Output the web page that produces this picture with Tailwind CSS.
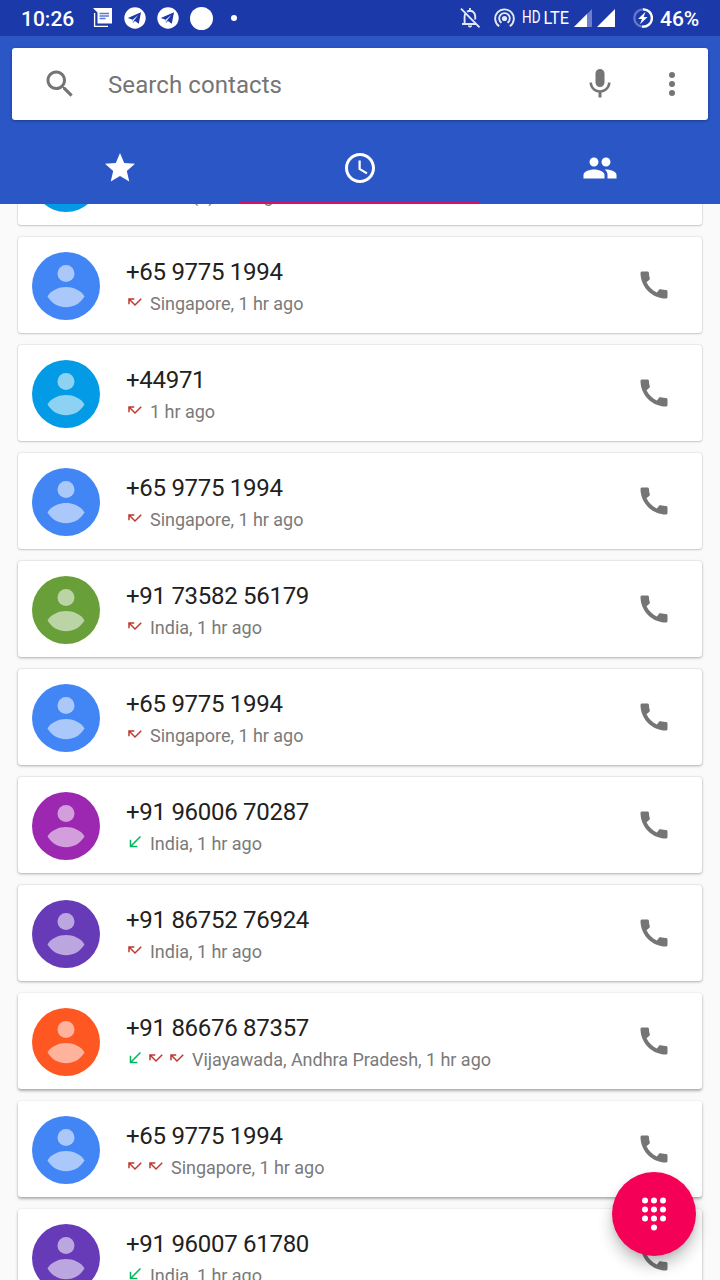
<!DOCTYPE html>
<html lang="en">
<head>
<meta charset="utf-8">
<title>Phone</title>
<script src="https://cdn.jsdelivr.net/npm/@tailwindcss/browser@4"></script>
</head>
<body class="w-[720px] h-[1280px] overflow-hidden bg-[#fafafa] font-[Roboto,sans-serif]">
<svg class="hidden">
  <symbol id="call" viewBox="0 0 24 24"><path d="M20.01 15.38c-1.23 0-2.42-.2-3.53-.56-.35-.12-.74-.03-1.01.24l-1.57 1.97c-2.83-1.35-5.48-3.9-6.89-6.83l1.95-1.66c.27-.28.35-.67.24-1.02-.37-1.11-.56-2.3-.56-3.53 0-.54-.45-.99-.99-.99H4.19C3.65 3 3 3.24 3 3.99 3 13.28 10.73 21 20.01 21c.71 0 .99-.63.99-1.18v-3.45c0-.54-.45-.99-.99-.99z"/></symbol>
  <symbol id="missed" viewBox="0 0 24 24"><path d="M19.59 7L12 14.59 6.41 9H11V7H3v8h2v-4.59l7 7 9-9L19.59 7z"/></symbol>
  <symbol id="received" viewBox="0 0 24 24"><path d="M20 5.41L18.59 4 7 15.59V9H5v10h10v-2H8.41z"/></symbol>
  <symbol id="person" viewBox="0 0 68 68"><circle cx="34" cy="21.5" r="8.5"/><path d="M15.5 44.5C19 38.200 27 35 34 35S49 38.200 52.500 44.500C48 52 41 55.200 34 55.200S20 52 15.500 44.500z"/></symbol>
  <symbol id="telegram" viewBox="0 0 22 22"><circle cx="11" cy="11" r="10.700" fill="#fff"/><path d="M3.800 11L17 5.300 14.800 16.800 10.900 14.100 9 16 8.600 12.800z" fill="#1c39aa"/><path d="M8.700 12.700L14.300 8 9.900 13.500 9 15.800z" fill="#fff"/></symbol>
</svg>
<div class="flex flex-col w-[720px] h-[1280px]">
  <!-- Status bar -->
  <div class="h-9 shrink-0 bg-[#1c39aa] flex items-center justify-between pl-[21px] pr-[20px] text-white">
    <div class="flex items-center">
      <span class="w-[72px] text-[21px] leading-9 font-medium pt-px">10:26</span>
      <svg class="w-5 h-5" viewBox="0 0 20 20"><path d="M0 0H19V15.500H4.500V4.500z" fill="#fff"/><path d="M1.600 5V18.300H15" fill="none" stroke="#fff" stroke-width="1.300"/><path d="M6.500 5.500H16M6.500 8H16M6.500 10.500H12.500" stroke="#5f78cf" stroke-width="1.300"/></svg>
      <svg class="w-[22px] h-[22px] ml-[11px]"><use href="#telegram"/></svg>
      <svg class="w-[22px] h-[22px] ml-[11px]"><use href="#telegram"/></svg>
      <span class="size-[23px] rounded-full bg-white ml-[11px]"></span>
      <span class="size-[6px] rounded-full bg-white ml-[18px]"></span>
    </div>
    <div class="flex items-center">
      <svg class="w-[22px] h-[22px]" viewBox="0 0 22 22" fill="none" stroke="#e3e8f7" stroke-width="1.900"><path d="M1 1.700L19.500 20.300M2 17H16.500M4.600 16.500V9.500Q4.700 7.500 5.700 6.200M7 4.700Q8.500 3.700 10 3.700 14.800 4.200 15.200 9.200V12.500M10 1V3.500"/><path d="M8.200 19H11.800L10 20.300z" fill="#e3e8f7" stroke-width="1"/></svg>
      <svg class="w-[22px] h-[22px] ml-[12px]" viewBox="0 0 22 22" fill="none" stroke="#e3e8f7" stroke-width="1.900"><circle cx="10.500" cy="11.500" r="2.600" fill="#e3e8f7" stroke="none"/><path d="M5.200 19.300A9.300 9.300 0 1 1 15.800 19.300"/><path d="M7.500 15.800A5.300 5.300 0 1 1 13.500 15.800"/></svg>
      <svg class="w-[48px] h-6 ml-[6px]" viewBox="0 0 48 24" fill="#fff" font-family="Roboto" font-size="18"><text x="0" y="17.300" textLength="18.500" lengthAdjust="spacingAndGlyphs">HD</text><text x="21.500" y="18.200" textLength="25.500" lengthAdjust="spacingAndGlyphs">LTE</text></svg>
      <svg class="w-[18px] h-[18px] ml-[4px]" viewBox="0 0 18 18"><path d="M18 0V18H0z" fill="#6d80c9"/><path d="M13 5V18H0z" fill="#fff"/></svg>
      <svg class="w-[18px] h-[18px] ml-[5px]" viewBox="0 0 18 18"><path d="M18 0V18H0z" fill="#fff"/></svg>
      <svg class="w-5 h-5 ml-[18px]" viewBox="0 0 20 20"><circle cx="10" cy="10" r="8.700" fill="none" stroke="#6478c6" stroke-width="2.300"/><path d="M10 1.300A8.700 8.700 0 1 1 9 18.600" fill="none" stroke="#fff" stroke-width="2.300"/><path d="M12.500 3.800L5 11H9L7 16.300 14.600 9H10.700z" fill="#fff"/></svg>
      <span class="ml-[7px] text-[21px] leading-9 font-medium w-[40px] whitespace-nowrap pt-px">46%</span>
    </div>
  </div>
  <!-- Search and tabs -->
  <div class="h-[168px] shrink-0 bg-[#2a56c6] pt-3 flex flex-col">
    <div class="mx-3 h-[72px] shrink-0 bg-white rounded-[3px] shadow-[0_1px_3px_rgba(0,0,0,0.3)] flex items-center pl-[30px] pr-[18px] text-[#757575]">
      <svg class="size-9" viewBox="0 0 24 24" fill="currentColor"><path d="M15.500 14h-.79l-.28-.27C15.410 12.590 16 11.110 16 9.500 16 5.910 13.090 3 9.500 3S3 5.910 3 9.500 5.910 16 9.500 16c1.610 0 3.090-.59 4.230-1.570l.27.28v.79l5 4.990L20.490 19l-4.990-5zm-6 0C7.010 14 5 11.990 5 9.500S7.010 5 9.500 5 14 7.010 14 9.500 11.990 14 9.500 14z"/></svg>
      <span class="ml-[30px] grow text-[24px] pt-[2px] tracking-[0.08px]">Search contacts</span>
      <svg class="size-9" viewBox="0 0 24 24" fill="currentColor"><path d="M12 14c1.660 0 3-1.340 3-3V5c0-1.660-1.340-3-3-3S9 3.340 9 5v6c0 1.660 1.340 3 3 3zm5.300-3c0 3-2.540 5.100-5.300 5.100S6.700 14 6.700 11H5c0 3.410 2.720 6.230 6 6.720V21h2v-3.280c3.280-.48 6-3.300 6-6.720h-1.700z"/></svg>
      <svg class="size-9 ml-9" viewBox="0 0 24 24" fill="currentColor"><circle cx="12" cy="6" r="2"/><circle cx="12" cy="12" r="2"/><circle cx="12" cy="18" r="2"/></svg>
    </div>
    <div class="grid grid-cols-3 grow text-white">
      <div class="flex justify-center pt-[30px]"><svg class="size-9" viewBox="0 0 24 24" fill="currentColor"><path d="M12 17.270L18.180 21l-1.640-7.030L22 9.240l-7.190-.61L12 2 9.190 8.630 2 9.240l5.460 4.730L5.820 21z"/></svg></div>
      <div class="flex justify-center pt-[30px] border-b-3 border-[#d80f66]"><svg class="size-9" viewBox="0 0 24 24" fill="currentColor"><path d="M11.990 2C6.470 2 2 6.480 2 12s4.470 10 9.990 10C17.520 22 22 17.520 22 12S17.520 2 11.990 2zM12 20c-4.420 0-8-3.580-8-8s3.580-8 8-8 8 3.580 8 8-3.580 8-8 8zm.5-13H11v6l5.250 3.150.75-1.230-4.500-2.670z"/></svg></div>
      <div class="flex justify-center pt-[30px]"><svg class="size-9" viewBox="0 0 24 24" fill="currentColor"><path d="M16 11c1.660 0 2.990-1.340 2.990-3S17.660 5 16 5c-1.660 0-3 1.340-3 3s1.340 3 3 3zm-8 0c1.660 0 2.990-1.340 2.990-3S9.660 5 8 5C6.340 5 5 6.340 5 8s1.340 3 3 3zm0 2c-2.330 0-7 1.170-7 3.500V19h14v-2.500c0-2.330-4.670-3.500-7-3.500zm8 0c-.29 0-.62.02-.97.05 1.160.84 1.970 1.970 1.970 3.450V19h6v-2.500c0-2.330-4.670-3.500-7-3.500z"/></svg></div>
    </div>
  </div>
  <!-- Call log -->
  <div class="grow min-h-0 overflow-hidden">
    <div id="log" class="-mt-[75px] flex flex-col gap-3 px-[18px]"></div>
  </div>
</div>
<button class="absolute left-[612px] top-[1172px] size-[84px] rounded-full bg-[#f50057] shadow-[0_9px_15px_rgba(0,0,0,0.24),0_2px_5px_rgba(0,0,0,0.08)] flex items-center justify-center" aria-label="Dial pad">
  <svg class="size-9" viewBox="0 0 24 24" fill="#fff"><circle cx="6" cy="3" r="2"/><circle cx="12" cy="3" r="2"/><circle cx="18" cy="3" r="2"/><circle cx="6" cy="9" r="2"/><circle cx="12" cy="9" r="2"/><circle cx="18" cy="9" r="2"/><circle cx="6" cy="15" r="2"/><circle cx="12" cy="15" r="2"/><circle cx="18" cy="15" r="2"/><circle cx="12" cy="21" r="2"/></svg>
</button>
<script>
const calls = [
  ['bg-[#039be5]', '+44971', 'mmm', '(4) 1 hr ago'],
  ['bg-[#4285f4]', '+65 9775 1994', 'm', 'Singapore, 1 hr ago'],
  ['bg-[#039be5]', '+44971', 'm', '1 hr ago'],
  ['bg-[#4285f4]', '+65 9775 1994', 'm', 'Singapore, 1 hr ago'],
  ['bg-[#689f38]', '+91 73582 56179', 'm', 'India, 1 hr ago'],
  ['bg-[#4285f4]', '+65 9775 1994', 'm', 'Singapore, 1 hr ago'],
  ['bg-[#9c27b0]', '+91 96006 70287', 'r', 'India, 1 hr ago'],
  ['bg-[#673ab7]', '+91 86752 76924', 'm', 'India, 1 hr ago'],
  ['bg-[#ff5722]', '+91 86676 87357', 'rmm', 'Vijayawada, Andhra Pradesh, 1 hr ago'],
  ['bg-[#4285f4]', '+65 9775 1994', 'mm', 'Singapore, 1 hr ago'],
  ['bg-[#673ab7]', '+91 96007 61780', 'r', 'India, 1 hr ago'],
];
const arrows = {
  m: '<svg class="size-[18px] mr-[3px] fill-[#c0392b]"><use href="#missed"/></svg>',
  r: '<svg class="size-[18px] mr-[3px] fill-[#00b85c]"><use href="#received"/></svg>',
};
// Shadows deepen toward the bottom of the screen.
const shadows = [
  'shadow-[0_0_2px_rgba(0,0,0,0.20),0_1px_2px_rgba(0,0,0,0.16)]',
  'shadow-[0_0_2px_rgba(0,0,0,0.14),0_1px_3px_rgba(0,0,0,0.28)]',
  'shadow-[0_0_2px_rgba(0,0,0,0.10),0_2px_3px_rgba(0,0,0,0.30)]',
];
document.getElementById('log').innerHTML = calls.map(([color, number, kinds, detail], i) => `
  <div class="h-24 shrink-0 bg-white rounded-[3px] flex pl-[14px] pr-[30px] ${shadows[Math.min(2, Math.floor(i / 4))]}">
    <div class="mt-[15px] size-[68px] shrink-0 rounded-full ${color}"><svg class="size-[68px] fill-white/55"><use href="#person"/></svg></div>
    <div class="ml-[26px] grow pt-[19px]">
      <div class="text-[24px] leading-8 tracking-[-0.29px] text-[#212121]">${number}</div>
      <div class="flex items-start pt-[5px] h-[30px]">${[...kinds].map(k => arrows[k]).join('')}<span class="ml-[3px] text-[18px] leading-[22px] tracking-[-0.03px] text-[#7a7a7a]">${detail}</span></div>
    </div>
    <svg class="mt-[30px] size-9 shrink-0 fill-[#757575]"><use href="#call"/></svg>
  </div>`).join('');
</script>
</body>
</html>
